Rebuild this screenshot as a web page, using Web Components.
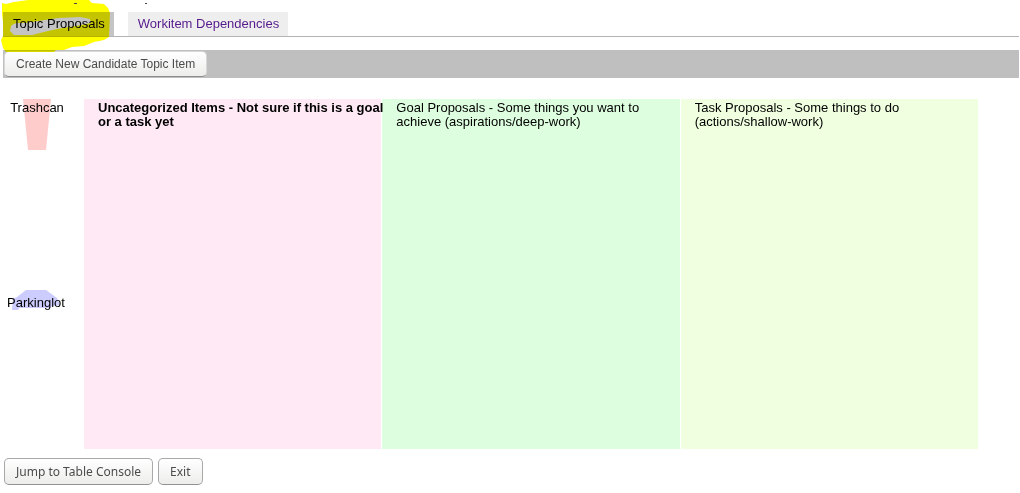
<!DOCTYPE html>
<html lang="en">
<head>
<meta charset="utf-8">
<title>Topic Proposals</title>
<style>
  body { margin: 0; background: #fff; color: #000; font: 13px/14px "Liberation Sans", Arial, sans-serif; }
</style>
</head>
<body>
<topic-app></topic-app>
<script>
class BaseElement extends HTMLElement {
  constructor() {
    super();
    this.attachShadow({ mode: 'open' }).innerHTML = this.constructor.markup;
  }
}

class TabLink extends BaseElement {
  static markup = `
    <style>
      :host { display: block; }
      a { display: block; padding: 5px 9px 5px 10px; background: #eee; color: #551a8b; text-decoration: none; }
      :host([current]) a { background: #c4c4c4; color: #000; }
    </style>
    <a href="#"><slot></slot></a>`;
}
customElements.define('tab-link', TabLink);

class MarkerStroke extends BaseElement {
  static markup = `
    <style>
      :host { position: absolute; left: 0; top: 0; pointer-events: none; mix-blend-mode: multiply; }
      svg { display: block; }
    </style>
    <svg width="150" height="54" viewBox="0 0 150 54" aria-hidden="true">
      <path fill="#ff0" fill-rule="evenodd" d="M2 3 L6 4 L14 2 L28 0 L89 0 L92 3 L104 4 L108 8 L110 13 L109 37 L104 40 L94 42 L84 46 L72 47 L64 50 L56 50 L54 52 L6 52 L3 48 L1 40 L3 36 L3 22 L2 14 Z
        M11 26 Q15 22 25 23 L58 18 L80 17 L90 19 L91 23 L76 26 L62 28 L48 31 L32 35 L14 35 L10 31 Z"/>
      <path fill="#444" d="M74 3h3v1h-3zM145 3h2v1h-2z"/>
    </svg>`;
}
customElements.define('marker-stroke', MarkerStroke);

class TabBar extends BaseElement {
  static markup = `
    <style>
      :host { display: block; }
      nav { display: flex; align-items: flex-end; gap: 14px; padding-top: 12px; border-bottom: 1px solid #b4b4b4; }
    </style>
    <nav><slot></slot></nav>`;
}
customElements.define('tab-bar', TabBar);

class PushButton extends BaseElement {
  static markup = `
    <style>
      :host { display: block; }
      button { display: block; margin: 0; box-sizing: border-box; height: 27px; padding: 0 11px; border: 1px solid #a9a9a9; border-bottom-color: #929292;
        border-radius: 5px; background: linear-gradient(#fff, #ededeb); color: #4c4c4c;
        font: 12px/16px "Noto Sans", "Open Sans", sans-serif; }
      :host([plain]) button { height: 26px; border-color: #d8d8d8; border-bottom-color: #8c8c8c; font: 12px/14px "Liberation Sans", Arial, sans-serif; }
    </style>
    <button type="button"><slot></slot></button>`;
}
customElements.define('push-button', PushButton);

class ToolBar extends BaseElement {
  static markup = `
    <style>
      :host { display: flex; margin-top: 13px; padding: 1px; background: #bfbfbf; }
    </style>
    <slot></slot>`;
}
customElements.define('tool-bar', ToolBar);

class DropTarget extends BaseElement {
  static markup = `
    <style>
      :host { display: grid; justify-items: center; align-items: start; }
      slot { display: block; grid-area: 1 / 1; }
      span { grid-area: 1 / 1; z-index: 1; padding-top: var(--label-top, 2px); }
    </style>
    <slot name="shape"></slot><span><slot></slot></span>`;
}
customElements.define('drop-target', DropTarget);

class TopicColumn extends BaseElement {
  static markup = `
    <style>
      :host { display: block; min-width: 0; padding: 2px 0 0 14px; }
      h2 { margin: 0 -4px 0 0; font: inherit; }
    </style>
    <h2><slot></slot></h2>`;
}
customElements.define('topic-column', TopicColumn);

class TopicBoard extends BaseElement {
  static markup = `
    <style>
      :host { display: grid; grid-template-columns: 80px repeat(3, minmax(0, 1fr)); column-gap: 1px; margin: 21px 41px 0 0; min-height: 350px; }
      aside { display: grid; grid-template-rows: 1fr 1fr; padding-right: 12px; }
      .lot { --label-top: 6px; padding: 16px 2px 0 0; }
      topic-column { z-index: 0; }
      .inbox { background: #ffe9f4; font-weight: bold; z-index: 1; }
      .goals { background: #deffdf; }
      .tasks { background: #f0ffdf; }
      svg { display: block; }
    </style>
    <aside>
      <drop-target>
        <svg slot="shape" width="28" height="51" viewBox="0 0 28 51" aria-hidden="true"><path fill="#fcc" d="M0 0H28L23 51H5Z"/></svg>
        Trashcan
      </drop-target>
      <drop-target class="lot">
        <svg slot="shape" width="48" height="20" viewBox="0 0 48 20" aria-hidden="true"><path fill="#ccf" d="M14 0H34L45 8L48 15L40 16L38 18H7L6 20H0L1 9L5 7Z"/></svg>
        Parkinglot
      </drop-target>
    </aside>
    <topic-column class="inbox">Uncategorized Items - Not sure if this is a goal or a task yet</topic-column>
    <topic-column class="goals">Goal Proposals - Some things you want to achieve (aspirations/deep-work)</topic-column>
    <topic-column class="tasks">Task Proposals - Some things to do (actions/shallow-work)</topic-column>`;
}
customElements.define('topic-board', TopicBoard);

class TopicApp extends BaseElement {
  static markup = `
    <style>
      :host { display: block; position: relative; padding: 0 1px 8px 3px; }
      footer { display: flex; gap: 5px; padding: 9px 1px 0; }
    </style>
    <tab-bar><tab-link current>Topic Proposals</tab-link><tab-link>Workitem Dependencies</tab-link></tab-bar>
    <tool-bar><push-button plain>Create New Candidate Topic Item</push-button></tool-bar>
    <topic-board></topic-board>
    <footer><push-button>Jump to Table Console</push-button><push-button>Exit</push-button></footer>
    <marker-stroke></marker-stroke>`;
}
customElements.define('topic-app', TopicApp);
</script>
</body>
</html>
